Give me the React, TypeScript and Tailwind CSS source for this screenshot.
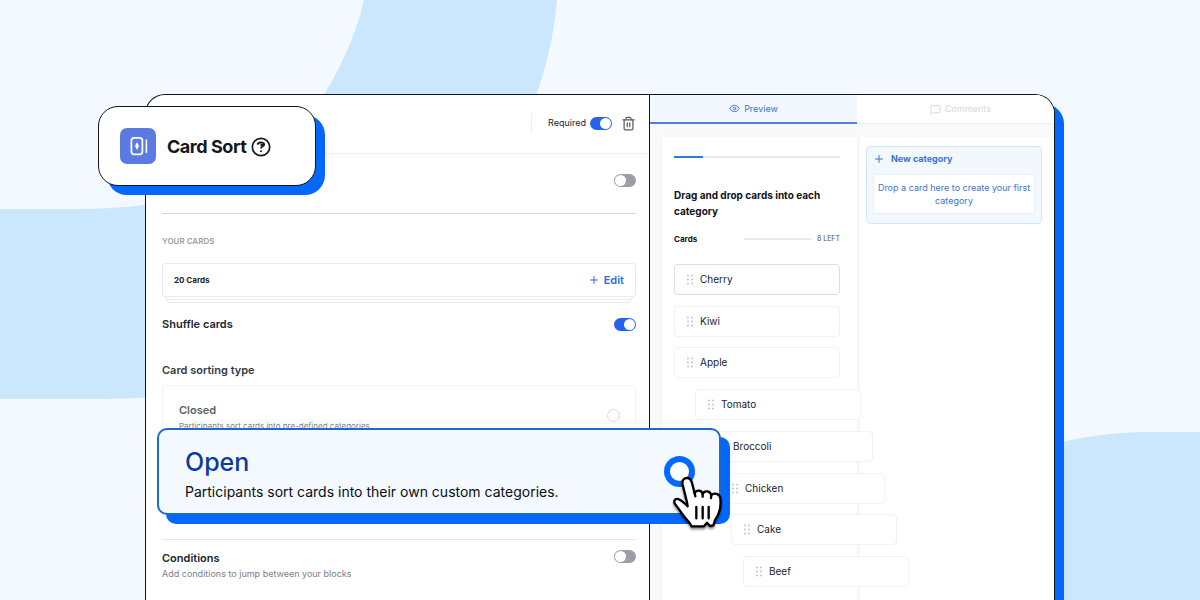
import { useState } from "react";
import { Eye, MessageSquare, Plus, Trash2 } from "lucide-react";

const previewCards = [
  { title: "Cherry", className: "border-[#dcdee1]" },
  { title: "Kiwi", className: "border-[#f1f2f4]" },
  { title: "Apple", className: "border-[#f1f2f4]" },
  { title: "Tomato", className: "ml-[21px] border-[#f1f2f4]" },
  { title: "Broccoli", className: "ml-[33px] border-[#f1f2f4]" },
  { title: "Chicken", className: "ml-[45px] border-[#f1f2f4]" },
  { title: "Cake", className: "ml-[57px] border-[#f1f2f4]" },
  { title: "Beef", className: "ml-[69px] border-[#f1f2f4]" },
];

function Toggle({ id, label, on }: { id: string; label?: string; on?: boolean }) {
  return (
    <input
      id={id}
      type="checkbox"
      role="switch"
      aria-label={label}
      defaultChecked={on}
      className="flex h-[13px] w-[22px] shrink-0 appearance-none items-center rounded-full bg-[#9c9da9] p-px before:size-[11px] before:rounded-full before:bg-white checked:justify-end checked:bg-[#2563eb]"
    />
  );
}

function DragHandle() {
  return (
    <svg viewBox="0 0 8 11" className="h-[11px] w-2 shrink-0" fill="#c9cbd1" aria-hidden="true">
      <circle cx="2" cy="1.5" r="1.1" />
      <circle cx="6" cy="1.5" r="1.1" />
      <circle cx="2" cy="5.5" r="1.1" />
      <circle cx="6" cy="5.5" r="1.1" />
      <circle cx="2" cy="9.5" r="1.1" />
      <circle cx="6" cy="9.5" r="1.1" />
    </svg>
  );
}

function Backdrop() {
  return (
    <svg
      viewBox="0 0 1200 600"
      preserveAspectRatio="xMidYMid slice"
      className="absolute inset-0 h-full w-full"
      fill="#cbe7fd"
      aria-hidden="true"
    >
      <path d="M364 0 H557 C554 34 547 66 535 98 L530 200 H240 C275 165 343 90 364 0 Z" />
      <path d="M0 209 H70 C100 209 125 208 150 204 V397 C130 399 100 399 70 399 H0 Z" />
      <path d="M1200 432 H1150 C1120 432 1090 435 1050 445 V600 H1200 Z" />
    </svg>
  );
}

function HandCursor() {
  return (
    <svg
      viewBox="48 70 159 171"
      className="pointer-events-none absolute top-[45px] left-[512px] h-[57px] w-[53px] drop-shadow-[0_2px_1px_rgba(0,0,0,0.45)]"
      fill="#fff"
      stroke="#000"
      strokeWidth="7"
      strokeLinejoin="round"
      strokeLinecap="round"
      aria-hidden="true"
    >
      <path d="M96 152 L83 99 C80 84 88 79 96 79 C105 79 109 86 111 94 L119 126 C122 113 141 114 143 127 C148 115 166 117 169 131 C176 122 195 125 196 140 C198 160 195 178 189 190 C184 200 178 204 178 212 L175 221 L165 223 L156 213 L147 224 L110 224 L104 214 C96 205 86 194 79 183 C73 174 67 166 61 158 C53 146 62 139 72 143 C82 147 88 155 98 164 Z" />
      <path d="M119 124 L121 134 M143 126 L143 135 M169 130 L168 139" fill="none" />
      <path d="M124 166 V200 M143 166 V200 M161 166 V200" fill="none" />
    </svg>
  );
}

function BlockBadge() {
  return (
    <div className="absolute top-[106px] left-[98px] z-30 flex h-20 w-[218px] items-center gap-[11px] rounded-[20px] border border-[#10141c] bg-white pl-[21px] shadow-[9px_9px_0_#0468ff]">
      <svg viewBox="0 0 36 36" className="size-9" fill="none" aria-hidden="true">
        <rect width="36" height="36" rx="7" fill="#5b7be2" />
        <rect x="11.4" y="9.8" width="11" height="16.6" rx="2.8" stroke="#fff" strokeWidth="1.7" />
        <path d="M17 14 L19 18 L17 22 L15 18 Z" fill="#fff" />
        <path d="M26.4 12 V24.5" stroke="#fff" strokeWidth="1.6" strokeLinecap="round" />
      </svg>
      <div className="flex items-center gap-[5px] pt-0.5">
        <h1 className="text-lg font-bold tracking-tight text-[#14171f]">Card Sort</h1>
        <svg viewBox="0 0 20 20" className="size-5" fill="none" stroke="#14171f" strokeWidth="1.7" aria-hidden="true">
          <circle cx="10" cy="10" r="8.7" />
          <path d="M6.6 7.6 C7 4.9 13.2 4.8 13.2 7.5 C13.2 9.5 10 9 10 11.4 M9.4 7.9 L12.2 7.9" strokeWidth="1.9" />
          <circle cx="10" cy="14.2" r="0.6" strokeWidth="1" fill="#14171f" />
        </svg>
      </div>
    </div>
  );
}

function Settings() {
  const [sortType, setSortType] = useState("open");

  return (
    <section className="relative z-20 border-r border-[#10141c]">
      {/* Header */}
      <header className="flex h-[59px] items-center justify-end border-b border-[#eeeff1] pr-[13px] pb-0.5">
        <div className="mr-4 h-5 w-px bg-[#eceef1]" />
        <label htmlFor="required" className="mr-1 text-[9px] text-[#20242e]">
          Required
        </label>
        <Toggle id="required" on />
        <button type="button" aria-label="Delete block" className="ml-[9px]">
          <Trash2 className="size-[15px] text-[#5b5f69]" strokeWidth={2} />
        </button>
      </header>

      <div className="pr-[13px] pl-4">
        <div className="flex h-[60px] items-start justify-end border-b border-[#d4d6da] pt-5">
          <Toggle id="instructions" label="Instructions" />
        </div>

        <h2 className="mt-[19px] text-[8px] leading-4 font-semibold text-[#9b9ea8]">YOUR CARDS</h2>

        {/* Stack of cards */}
        <div className="mt-3.5">
          <div className="flex h-[34px] items-center justify-between rounded-[3px] border border-[#e9eaed] px-[11px]">
            <span className="text-[8px] font-bold text-[#20242e]">20 Cards</span>
            <button type="button" className="flex items-center gap-1 text-[11px] font-semibold text-[#2f6cd6]">
              <Plus className="size-3" strokeWidth={2} />
              Edit
            </button>
          </div>
          <div className="mx-[3px] h-[3px] rounded-b-sm border border-t-0 border-[#e9eaed]" />
          <div className="mx-[5px] h-[3px] rounded-b-sm border border-t-0 border-[#e9eaed]" />
        </div>

        <div className="mt-[13px] flex h-4 items-center justify-between">
          <label htmlFor="shuffle" className="text-[11px] font-semibold text-[#20242e]">
            Shuffle cards
          </label>
          <Toggle id="shuffle" on />
        </div>

        <h2 className="mt-[30px] text-[11px] leading-4 font-semibold text-[#353943]">Card sorting type</h2>

        {/* Sorting type options */}
        <div className="relative mt-[7px] h-[155px] border-b border-[#e6e7ea]">
          <label className="flex h-16 items-start justify-between rounded-[3px] border border-[#f3f4f5] pt-4 pr-[15px] pl-4">
            <span className="text-[#5b5f69]">
              <span className="block text-[11px] leading-4 font-semibold">Closed</span>
              <span className="block text-[8px] leading-4 text-[#7b7f89]">
                Participants sort cards into pre-defined categories
              </span>
            </span>
            <input
              type="radio"
              name="sort-type"
              checked={sortType === "closed"}
              onChange={() => setSortType("closed")}
              className="mt-[7px] size-[13px] appearance-none rounded-full border border-[#d9dbdf] bg-white"
            />
          </label>

          <label className="absolute top-[43px] -right-[85px] -left-[5px] flex h-[87px] items-start justify-between rounded-[10px] border-2 border-[#1b69d2] bg-[#f3f9ff] pt-4 pr-6 pl-[26px] shadow-[9px_9px_0_#0468ff]">
            <span>
              <span className="block text-[25px] leading-8 font-medium text-[#0d3a9c]">Open</span>
              <span className="block text-sm leading-7 text-[#0b0d12]">
                Participants sort cards into their own custom categories.
              </span>
            </span>
            <input
              type="radio"
              name="sort-type"
              checked={sortType === "open"}
              onChange={() => setSortType("open")}
              className="mt-2.5 size-[31px] appearance-none rounded-full border-[6px] border-[#0468ff] bg-white"
            />
            <HandCursor />
          </label>
        </div>

        <div className="mt-2.5 flex items-start justify-between">
          <div>
            <label htmlFor="conditions" className="block text-[11px] leading-4 font-semibold text-[#20242e]">
              Conditions
            </label>
            <p className="text-[9px] leading-4 text-[#7b7f89]">Add conditions to jump between your blocks</p>
          </div>
          <Toggle id="conditions" />
        </div>
      </div>
    </section>
  );
}

function Preview() {
  return (
    <section className="relative z-10 flex flex-col overflow-hidden rounded-tr-[19px] bg-[#f7f9fa]">
      {/* Tabs */}
      <div role="tablist" className="grid h-[29px] grid-cols-[207fr_197fr] text-[9px]">
        <button
          type="button"
          role="tab"
          aria-selected="true"
          className="flex items-center justify-center gap-1 border-b-2 border-[#4a83dc] bg-[#f2f8fe] text-[#3f72cf]"
        >
          <Eye className="size-[11px]" />
          Preview
        </button>
        <button
          type="button"
          role="tab"
          aria-selected="false"
          className="flex items-center justify-center gap-1 border-b border-[#eeeff1] bg-white pl-2.5 text-[#d5d7da]"
        >
          <MessageSquare className="size-[11px]" />
          Comments
        </button>
      </div>

      <div className="mt-[13px] ml-3 grid flex-1 grid-cols-[195fr_194fr] gap-[3px]">
        <div className="z-10 bg-white px-3 pt-[19px] shadow-[0_0_4px_rgba(15,23,42,0.04)]">
          <div className="mr-[5px]">
            <div className="h-0.5 bg-[#e7e9eb]">
              <div className="h-0.5 w-[29px] bg-[#2f78d6]" />
            </div>
            <h2 className="mt-[29px] text-[10px] leading-4 font-bold text-[#10131a]">
              Drag and drop cards into each category
            </h2>

            <div className="mt-3 flex h-4 items-center text-[#10131a]">
              <h3 className="flex-1 text-[8px] font-bold">Cards</h3>
              <div className="mr-[5px] h-0.5 w-[68px] bg-[#e9eaec]" />
              <span className="text-[7px] text-[#4b4f59]">8 LEFT</span>
            </div>

            <ul className="mt-[17px] flex h-[323px] flex-col justify-between">
              {previewCards.map((card) => (
                <li
                  key={card.title}
                  className={`flex h-[31px] w-full items-center gap-1.5 rounded-sm border bg-white pl-[11px] text-[10px] text-[#20242e] ${card.className}`}
                >
                  <DragHandle />
                  {card.title}
                </li>
              ))}
            </ul>
          </div>
        </div>

        <div className="bg-white pt-[9px] pr-3 pl-1.5">
          <div className="h-[78px] rounded-[4px] border border-[#d3e7fa] bg-[#f2f8fe] px-1.5 text-[#3f72cf]">
            <button type="button" className="flex h-6 items-center gap-1.5 text-[9px] font-bold">
              <Plus className="size-3" strokeWidth={2} />
              New category
            </button>
            <p className="mt-[3px] flex h-10 items-center justify-center rounded-[3px] border border-[#e9f2fb] bg-white text-center text-[9px] leading-[13px]">
              Drop a card here to create your first category
            </p>
          </div>
        </div>
      </div>
    </section>
  );
}

export default function App() {
  return (
    <div className="relative flex min-h-screen flex-col overflow-hidden bg-[#f3f9ff] px-[145px] pt-[94px] font-['Inter','Liberation_Sans',sans-serif]">
      <Backdrop />
      <BlockBadge />
      <main className="relative grid flex-1 grid-cols-[504fr_404fr] rounded-t-[20px] border border-b-0 border-[#10141c] bg-white shadow-[9px_10px_0_#0468ff]">
        <Settings />
        <Preview />
      </main>
    </div>
  );
}
